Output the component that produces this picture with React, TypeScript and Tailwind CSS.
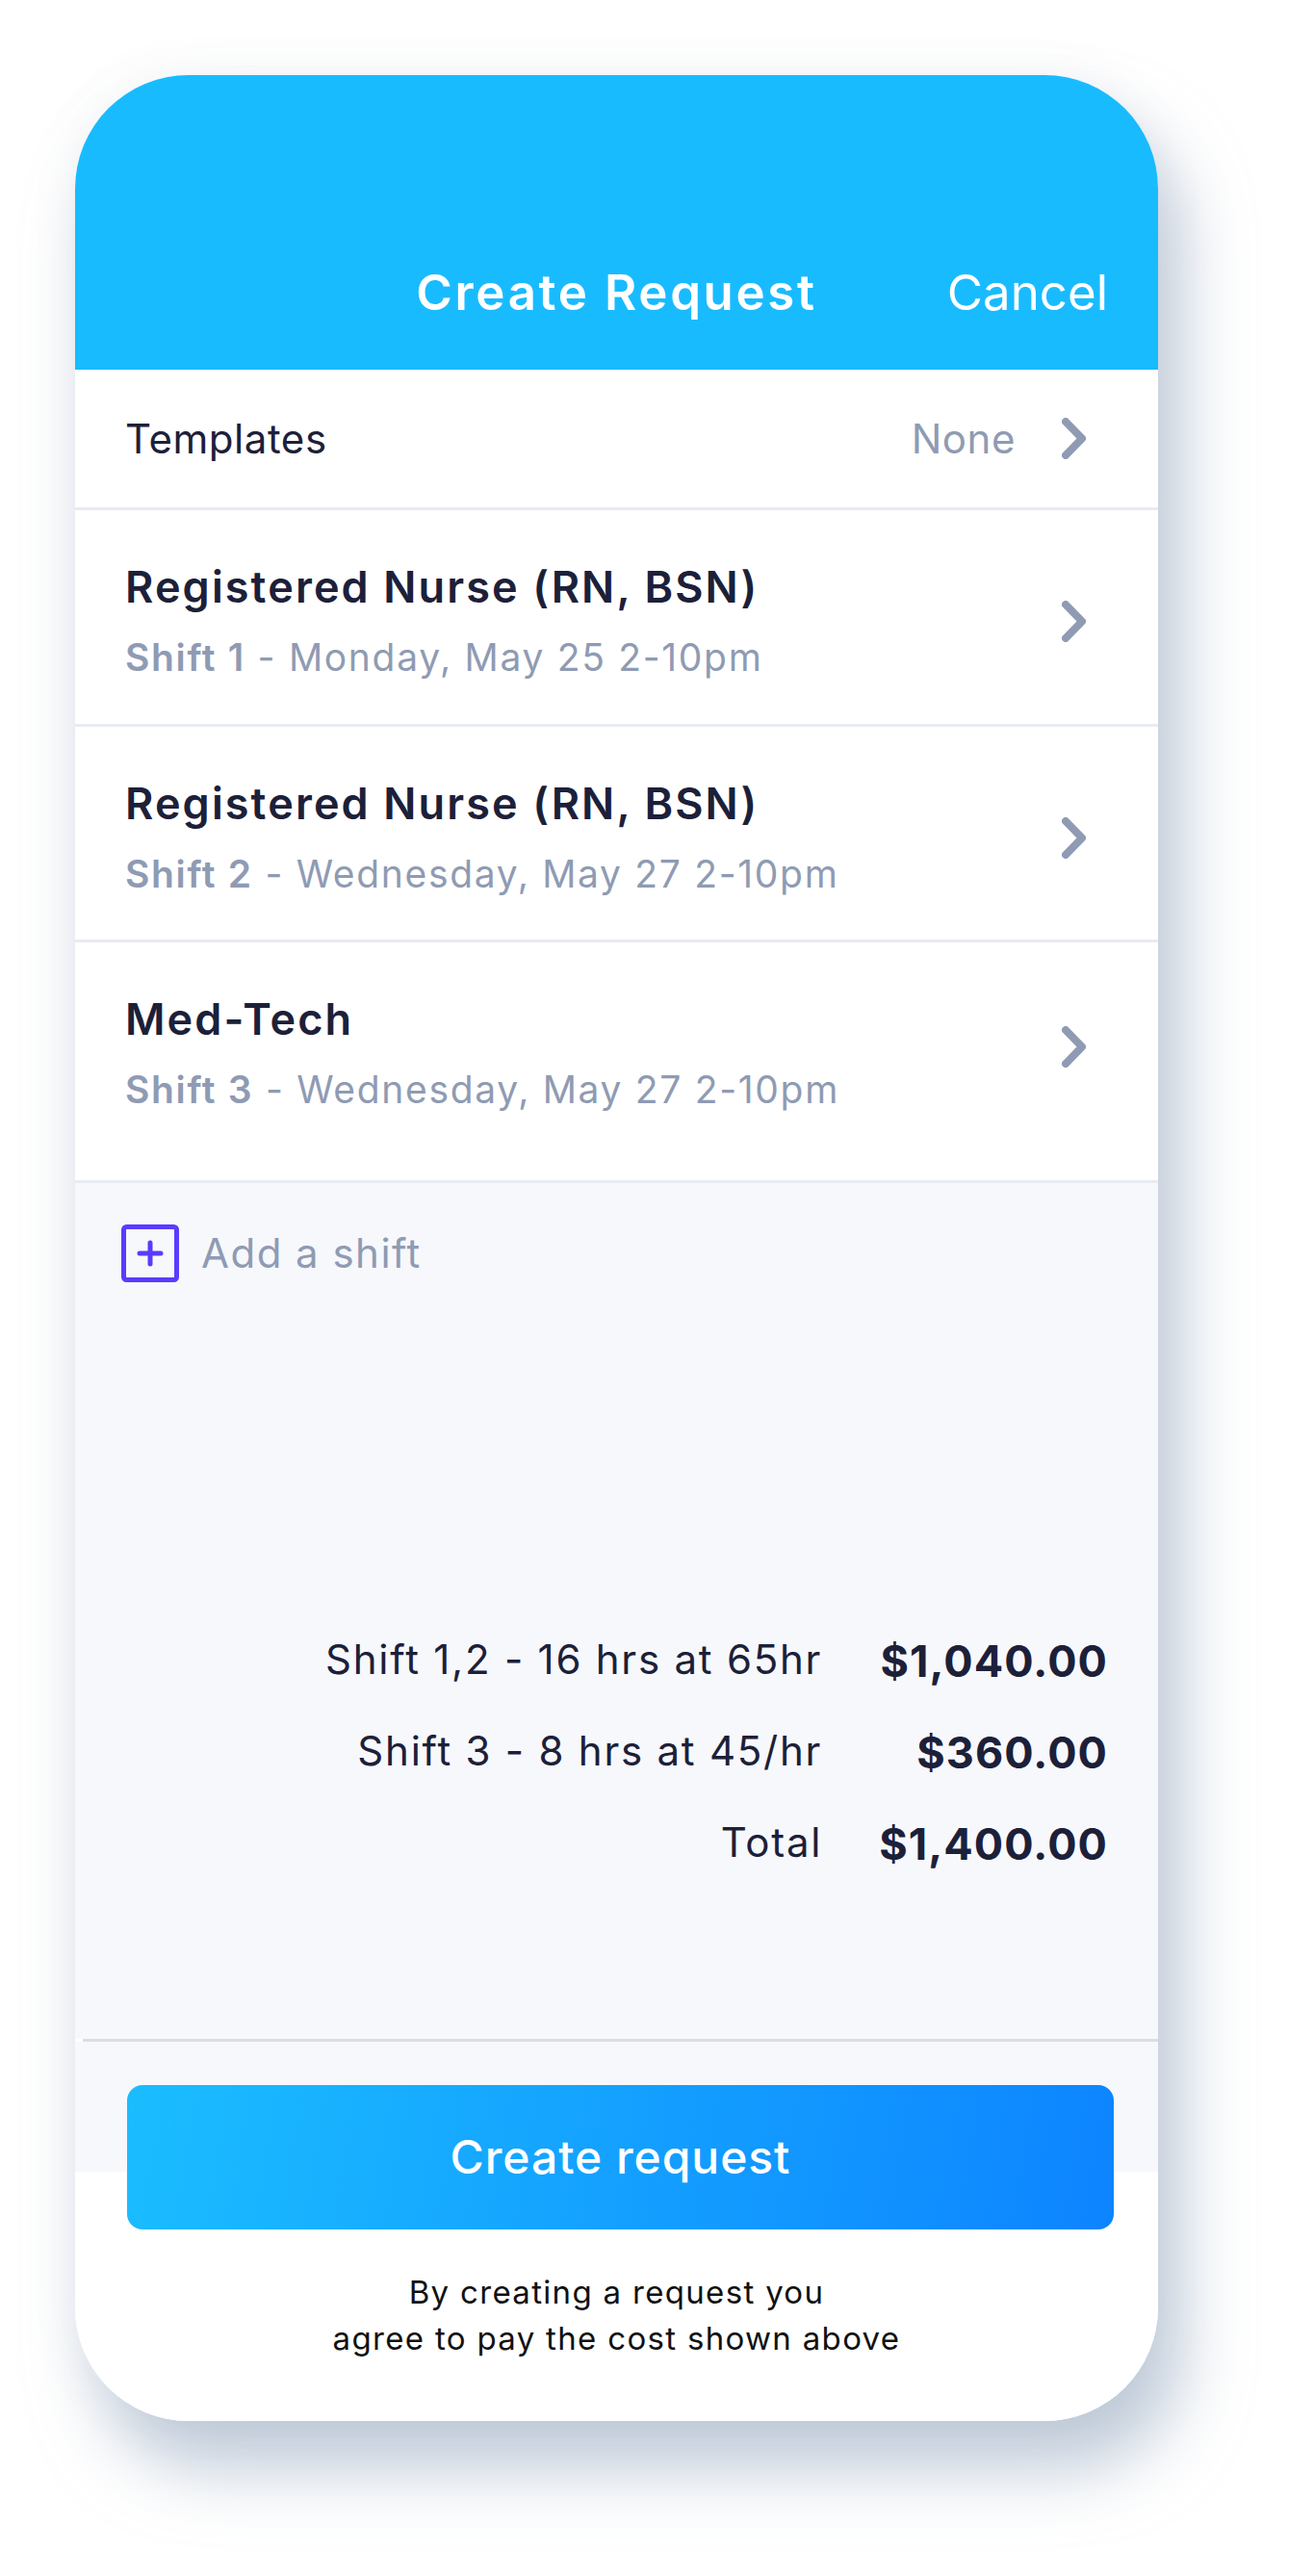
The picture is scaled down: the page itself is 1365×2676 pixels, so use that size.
import React from 'react';

const shifts = [
  { title: 'Registered Nurse (RN, BSN)', shift: 'Shift 1', when: 'Monday, May 25 2-10pm', pb: 'pb-[45px]', chev: '' },
  { title: 'Registered Nurse (RN, BSN)', shift: 'Shift 2', when: 'Wednesday, May 27 2-10pm', pb: 'pb-[44px]', chev: '' },
  { title: 'Med-Tech', shift: 'Shift 3', when: 'Wednesday, May 27 2-10pm', pb: 'pb-[70px]', chev: 'mb-[14px]' },
];

const costs = [
  { label: 'Shift 1,2 - 16 hrs at 65hr', amount: '$1,040.00' },
  { label: 'Shift 3 - 8 hrs at 45/hr', amount: '$360.00' },
  { label: 'Total', amount: '$1,400.00' },
];

const Chevron = ({ className = '' }: { className?: string }) => (
  <svg width="25" height="43" viewBox="0 0 25 43" fill="none" className={`shrink-0 ${className}`}>
    <polyline
      points="4,4 21,21.5 4,39"
      stroke="#8f9bb3"
      strokeWidth="8"
      strokeLinecap="round"
      strokeLinejoin="round"
    />
  </svg>
);

const PlusBox = () => (
  <svg width="60" height="60" viewBox="0 0 60 60" fill="none" className="shrink-0">
    <rect x="2.5" y="2.5" width="55" height="55" rx="3" stroke="#583cff" strokeWidth="5" />
    <path d="M30 19v22M19 30h22" stroke="#583cff" strokeWidth="5" strokeLinecap="round" />
  </svg>
);

export default function App() {
  return (
    <div className="min-h-[2676px] bg-white pl-[78px] pt-[78px] font-['Inter',sans-serif]">
      <div className="w-[1125px] overflow-hidden rounded-[118px] bg-white shadow-[24px_50px_70px_rgba(140,160,185,0.55),0_0_50px_rgba(120,130,150,0.08)]">
        {/* header */}
        <div className="grid h-[306px] grid-cols-[1fr_auto_1fr] items-end bg-[#19bbff] px-[52px] pb-[50px] text-white">
          <div />
          <div className="text-[51px] font-semibold leading-[60px] tracking-[0.052em]">Create Request</div>
          <div className="justify-self-end text-[51px] leading-[60px]">Cancel</div>
        </div>

        {/* templates */}
        <div className="flex h-[146px] items-center border-b-[3px] border-[#e8ebf1] pl-[52px] pr-[75px] tracking-[0.035em]">
          <span className="flex-1 text-[42px] leading-[50px] text-[#1c2039]">Templates</span>
          <span className="mr-[48px] text-[42px] leading-[50px] text-[#8f9bb3]">None</span>
          <Chevron />
        </div>

        {/* shifts */}
        {shifts.map((s) => (
          <div
            key={s.shift}
            className={`flex items-center border-b-[3px] border-[#e8ebf1] pl-[52px] pr-[75px] pt-[53px] ${s.pb}`}
          >
            <div className="flex flex-1 flex-col gap-[22px]">
              <div className="text-[45px] font-semibold leading-[54px] tracking-[0.047em] text-[#1c2039]">
                {s.title}
              </div>
              <div className="text-[39px] leading-[48px] tracking-[0.043em] text-[#8f9bb3]">
                <span className="font-semibold">{s.shift}</span> - {s.when}
              </div>
            </div>
            <Chevron className={s.chev} />
          </div>
        ))}

        {/* add shift + summary */}
        <div className="bg-[#f7f8fc] pb-[157px] pl-[48px] pr-[52px] pt-[43px]">
          <div className="flex items-center gap-[23px]">
            <PlusBox />
            <span className="text-[42px] leading-[50px] tracking-[0.035em] text-[#8f9bb3]">Add a shift</span>
          </div>
          <div className="mt-[344px] grid grid-cols-[auto_auto] justify-end gap-x-[59px] text-[#1c2039]">
            {costs.map((c) => (
              <React.Fragment key={c.label}>
                <div className="text-right text-[42px] leading-[95px] tracking-[0.042em]">{c.label}</div>
                <div className="pt-[5px] text-right text-[45px] font-bold leading-[90px] tracking-[0.024em]">
                  {c.amount}
                </div>
              </React.Fragment>
            ))}
          </div>
        </div>

        {/* footer */}
        <div className="ml-2 h-[3px] bg-[#d9dde3]" />
        <div className="bg-[linear-gradient(to_bottom,#f7f8fc_135px,#ffffff_135px)] pb-[62px] pt-[45px]">
          <button className="ml-[54px] mr-[46px] flex h-[150px] w-[1025px] items-center justify-center rounded-[16px] bg-[linear-gradient(100deg,#1bbdff_0%,#0d84ff_100%)] text-[48px] font-medium tracking-[0.02em] text-white">
            Create request
          </button>
          <p className="mt-[41px] text-center text-[33px] leading-[48px] tracking-[0.04em] text-[#111111]">
            By creating a request you
            <br />
            agree to pay the cost shown above
          </p>
        </div>
      </div>
    </div>
  );
}
